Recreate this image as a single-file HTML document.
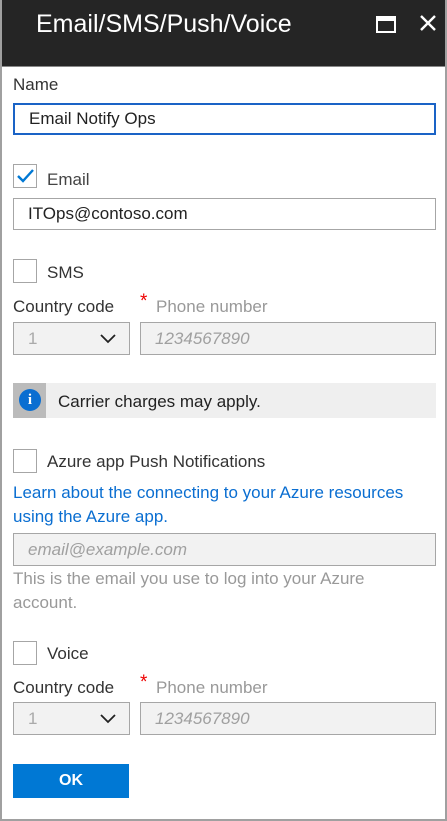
<!DOCTYPE html>
<html><head><style>
*{margin:0;padding:0;box-sizing:border-box}
body{width:447px;height:821px;background:#fff;font-family:"Segoe UI","Liberation Sans",sans-serif;position:relative;overflow:hidden;color:#333}
.frame{position:absolute;left:0;top:0;width:447px;height:821px;border:2px solid #a0a0a0;border-top:none}
.hdr{position:absolute;left:0;top:0;width:447px;height:67px;background:#252525;border-bottom:1px solid #888}
.ttl{position:absolute;left:36px;top:10px;color:#fff;font-size:25px;font-weight:300}
.a{position:absolute}
.lbl{font-size:17px;color:#333;white-space:nowrap}
.inp{border:1px solid #a6a6a6;font-size:17px;padding-left:14px;display:flex;align-items:center;background:#fff}
.dis{background:#f2f2f2;color:#a0a0a0;font-style:italic}
.cb{width:24px;height:24px;border:1px solid #a6a6a6;background:#fff}
.gray{color:#999}
</style></head><body>
<div class="hdr"></div>
<div class="ttl">Email/SMS/Push/Voice</div>
<div class="a" style="left:376px;top:16px;width:20px;height:17px;border:2px solid #fff;border-top-width:5px"></div>
<svg class="a" style="left:419px;top:14px" width="18" height="18"><path d="M2 2L16 16M16 2L2 16" stroke="#fff" stroke-width="2.4"/></svg>
<div class="frame"></div>

<div class="a lbl" style="left:13px;top:75px">Name</div>
<div class="a inp" style="left:13px;top:103px;width:423px;height:32px;border:2px solid #1a63c6;color:#222">Email Notify Ops</div>

<div class="a cb" style="left:13px;top:164px"></div>
<svg class="a" style="left:16px;top:168px" width="20" height="16"><path d="M2 8L7 13L17 2" stroke="#0078d4" stroke-width="2.4" fill="none"/></svg>
<div class="a lbl" style="left:47px;top:170px;color:#444">Email</div>
<div class="a inp" style="left:13px;top:198px;width:423px;height:32px;color:#222">ITOps@contoso.com</div>

<div class="a cb" style="left:13px;top:259px"></div>
<div class="a lbl" style="left:47px;top:263px">SMS</div>
<div class="a lbl" style="left:13px;top:297px">Country code</div>
<div class="a" style="left:140px;top:291px;color:#e00;font-size:19px">*</div>
<div class="a lbl gray" style="left:156px;top:297px">Phone number</div>
<div class="a inp dis" style="left:13px;top:322px;width:117px;height:33px;font-style:normal;color:#aaa">1</div>
<svg class="a" style="left:100px;top:334px" width="16" height="10"><path d="M1 1L8 8L15 1" stroke="#222" stroke-width="1.8" fill="none"/></svg>
<div class="a inp dis" style="left:140px;top:322px;width:296px;height:33px">1234567890</div>

<div class="a" style="left:13px;top:383px;width:423px;height:35px;background:#efefef"></div>
<div class="a" style="left:13px;top:383px;width:33px;height:35px;background:#bbb"></div>
<div class="a" style="left:19px;top:389px;width:22px;height:22px;border-radius:50%;background:#0a6ed1;color:#fff;font-weight:bold;font-size:15px;text-align:center;line-height:22px;font-family:'Liberation Serif',serif">i</div>
<div class="a lbl" style="left:58px;top:392px;color:#222">Carrier charges may apply.</div>

<div class="a cb" style="left:13px;top:449px"></div>
<div class="a lbl" style="left:47px;top:452px">Azure app Push Notifications</div>
<div class="a" style="left:13px;top:481px;font-size:17px;color:#0a6ed1;line-height:24px;width:405px">Learn about the connecting to your Azure resources using the Azure app.</div>
<div class="a inp dis" style="left:13px;top:533px;width:423px;height:33px">email@example.com</div>
<div class="a" style="left:13px;top:567px;font-size:17px;color:#999;line-height:24px;width:400px">This is the email you use to log into your Azure account.</div>

<div class="a cb" style="left:13px;top:641px"></div>
<div class="a lbl" style="left:47px;top:644px">Voice</div>
<div class="a lbl" style="left:13px;top:678px">Country code</div>
<div class="a" style="left:140px;top:672px;color:#e00;font-size:19px">*</div>
<div class="a lbl gray" style="left:156px;top:678px">Phone number</div>
<div class="a inp dis" style="left:13px;top:702px;width:117px;height:33px;font-style:normal;color:#aaa">1</div>
<svg class="a" style="left:100px;top:714px" width="16" height="10"><path d="M1 1L8 8L15 1" stroke="#222" stroke-width="1.8" fill="none"/></svg>
<div class="a inp dis" style="left:140px;top:702px;width:296px;height:33px">1234567890</div>

<div class="a" style="left:13px;top:764px;width:116px;height:34px;background:#0078d4;color:#fff;font-weight:bold;font-size:16px;text-align:center;line-height:34px">OK</div>
</body></html>
